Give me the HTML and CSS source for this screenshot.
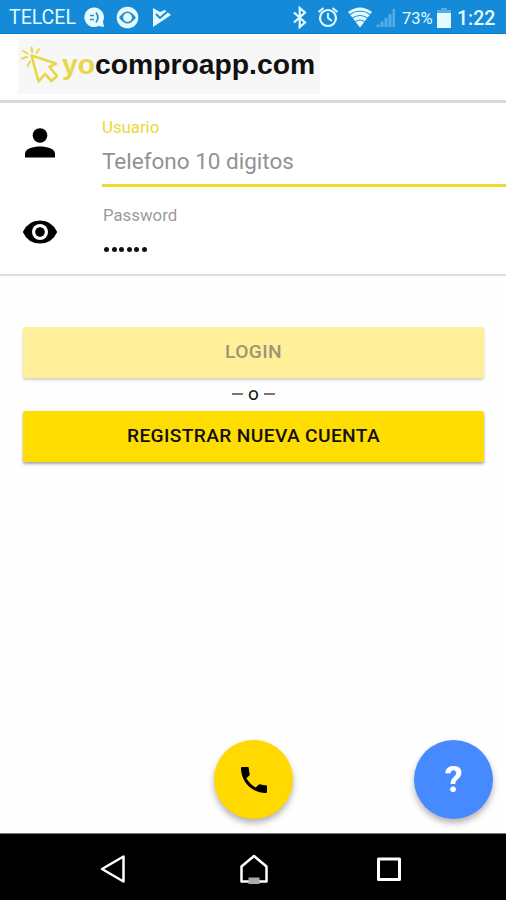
FILE: index.html
```html
<!DOCTYPE html>
<html lang="es">
<head>
<meta charset="utf-8">
<title>yocomproapp.com</title>
<link rel="stylesheet" href="styles.css">
</head>
<body>
<div class="status">
  <span class="carrier">TELCEL</span>
  <svg class="notifications" width="90" height="24" viewBox="84 6 90 24">
    <path fill="#e4fbff" d="M94 7.500a9.800 9.800 0 1 0 4.500 18.600l5.500 1-1-5.500A9.800 9.800 0 0 0 94 7.500z"/>
    <path d="M90 15.500h4M90 19.500h4M96 12.500q3.800 5 0 10" fill="none" stroke="#288fce" stroke-width="1.700"/>
    <circle cx="127.500" cy="17.500" r="10.800" fill="#e4fbff"/>
    <path d="M119 17.500q8.500-12 17 0q-8.500 12-17 0z" fill="#288fce"/>
    <circle cx="127.500" cy="17.500" r="4.400" fill="#e4fbff"/>
    <path d="M153 8l7 4 5-2 6 5-18 12z" fill="#e4fbff"/>
    <path d="M156 14l4 4 8-7" fill="none" stroke="#158ad8" stroke-width="2"/>
  </svg>
  <svg class="indicators" width="108" height="24" viewBox="290 6 108 24">
    <path d="M294 12.500l11 10-5.300 4.500V8l5.300 4.500-11 10" fill="none" stroke="#e4fbff" stroke-width="2.200"/>
    <circle cx="328" cy="18" r="8" fill="none" stroke="#e4fbff" stroke-width="2.200"/>
    <path d="M328 13v5l4 3M318.500 12l5-4M337.500 12l-5-4" fill="none" stroke="#e4fbff" stroke-width="1.800"/>
    <path d="M348 12q12-9 24 0l-12 15.500z" fill="#e4fbff"/>
    <path d="M349.500 14.500q10.500-7 21 0M352.500 18q7.500-5 15 0M355.500 21.500q4.500-3 9 0" fill="none" stroke="#158ad8" stroke-width="1.100"/>
    <path d="M376.500 27v-2.500h3v2.500zM380.500 27v-5.500h3v5.500zM384.500 27v-9h3v9zM388.500 27v-13h3v13zM392.500 27v-18h2.500v18z" fill="#55ade6"/>
  </svg>
  <span class="percent">73%</span>
  <svg class="battery" width="14" height="20" viewBox="0 0 14 20"><path d="M4 0h6v2h4v5H0V2h4z" fill="#55ade6"/><path d="M0 5h14v15H0z" fill="#e4fbff"/></svg>
  <span class="clock">1:22</span>
</div>
<header class="header">
  <div class="brand">
    <svg width="44" height="44" viewBox="18 42 44 44" fill="none" stroke="#e8d649" stroke-linejoin="round" stroke-linecap="round">
      <path stroke-width="2.600" d="M31.500 55.500L56 63.500l-6.500 3.500 7.500 9-5.500 5-6.500-7-6.500 7.500z"/>
      <path stroke-width="2" d="M22 58.500l5-1.500M23 51l4.500 2.500M27.500 66l2.500-4.500M31.500 47.500l.8 4.500M39 49l-2.500 4"/>
    </svg>
    <span class="wordmark"><span class="yo">yo</span>comproapp.com</span>
  </div>
</header>
<main class="content">
  <form class="fields">
    <div class="field user">
      <svg class="field-icon" width="36" height="36" viewBox="0 0 36 36"><circle cx="18" cy="10.500" r="7.300"/><path d="M3 32.500v-4C3 24 11 21.500 18 21.500S33 24 33 28.500v4z"/></svg>
      <div class="field-body focused">
        <span class="label">Usuario</span>
        <span class="placeholder">Telefono 10 digitos</span>
      </div>
    </div>
    <div class="field pass">
      <svg class="field-icon" width="36" height="36" viewBox="0 0 36 36"><path d="M.800 18Q6 6.500 18 6.500T35.200 18Q30 29.500 18 29.500T.800 18z"/><circle cx="18" cy="18" r="8" fill="#fff"/><circle cx="18" cy="18" r="4.800"/></svg>
      <div class="field-body">
        <span class="label">Password</span>
        <span class="dots"><i></i><i></i><i></i><i></i><i></i><i></i></span>
      </div>
    </div>
  </form>
  <div class="actions">
    <div class="button disabled"><span>LOGIN</span></div>
    <div class="or"><i></i><span>o</span><i></i></div>
    <div class="button"><span>REGISTRAR NUEVA CUENTA</span></div>
  </div>
  <div class="fabs">
    <div class="fab call"><svg width="26" height="26" viewBox="0 0 26 26"><path d="M0 1Q0 0 1 0H6.800Q7.800 0 7.800 1 7.800 4.500 8.700 7 8.900 7.800 8.300 8.400L5.400 11.300Q9 17.400 14.700 20.600L17.600 17.700Q18.300 17.100 19.100 17.300 21.500 18.200 25 18.200 26 18.200 26 19.200V25Q26 26 25 26C11 26 0 15 0 1z"/></svg></div>
    <div class="fab help"><span>?</span></div>
  </div>
</main>
<nav class="navbar">
  <svg width="26" height="30" viewBox="0 0 26 30" fill="none" stroke="#fff" stroke-width="2.500" stroke-linejoin="round"><path d="M2 15L23.500 2.500v25z"/></svg>
  <svg class="home" width="30" height="30" viewBox="0 0 30 30" fill="none" stroke="#fff" stroke-width="2.500" stroke-linejoin="round"><path d="M2.500 27.500V12.500L15 2l12.500 10.500v15z"/><path d="M9.500 23.500h11v6.500h-11z" fill="#aaa" stroke="none"/></svg>
  <svg width="26" height="26" viewBox="0 0 26 26" fill="none" stroke="#fff" stroke-width="3" stroke-linejoin="round"><path d="M2.500 3h21v20.500h-21z"/></svg>
</nav>
</body>
</html>
```
FILE: styles.css
```css
* { box-sizing: border-box; }
body {
  margin: 0;
  height: 900px;
  display: flex;
  flex-direction: column;
  overflow: hidden;
  background: #fefefe;
  font-family: Roboto, sans-serif;
  color: #111;
}
svg { display: block; flex: none; }
.status {
  height: 34px;
  flex: none;
  display: flex;
  align-items: center;
  padding: 2px 11px 0 9px;
  background: #158ad8;
  border-bottom: 1px solid #087bc7;
  color: #e4fbff;
  white-space: nowrap;
}
.carrier { width: 75px; font-size: 19.500px; line-height: 24px; padding-top: 1px; }
.indicators { margin-left: auto; }
.percent { width: 36px; padding: 1px 0 0 4px; font-size: 16.500px; }
.battery { margin-left: 3px; }
.clock { width: 38px; margin-left: 6px; padding-top: 1px; font-size: 19.500px; font-weight: 500; }
.header {
  height: 69px;
  flex: none;
  padding: 5px 18px;
  background: #fff;
  border-bottom: 3px solid #d8d8d8;
}
.brand {
  width: 302px;
  height: 55px;
  display: flex;
  padding-top: 3px;
  background: #f7f7f7;
}
.wordmark {
  font: bold 28.300px/44px "Liberation Sans", sans-serif;
  white-space: nowrap;
}
.yo { color: #e8d649; }
.content { flex: 1; display: flex; flex-direction: column; }
.fields {
  height: 173px;
  border-bottom: 2px solid #dedede;
  background: #fff;
}
.field { display: flex; padding-left: 22px; }
.user { height: 84px; }
.user .field-icon { margin-top: 22px; }
.pass .field-icon { margin-top: 27px; }
.field-body { flex: 1; margin-left: 44px; display: flex; flex-direction: column; }
.focused { border-bottom: 3px solid #eddb27; }
.label { font-size: 16.800px; line-height: 20px; margin-top: 14px; color: #e9d936; }
.pass .label { margin-top: 18px; padding-left: 1px; color: #9b9b9b; }
.placeholder { margin-top: 9px; font-size: 22.500px; line-height: 30px; color: #929292; }
.dots { display: flex; gap: 2.600px; margin-top: 22px; padding-left: 2px; }
.dots i { width: 5px; height: 5px; border-radius: 50%; background: #111; }
.actions { padding: 51px 22px 0 23px; }
.button {
  height: 51px;
  border-radius: 2px;
  background: #fd0;
  box-shadow: 0 2px 3px rgba(0,0,0,.35);
  text-align: center;
  font-size: 19.200px;
  letter-spacing: .35px;
  font-weight: 500;
  line-height: 49px;
}
.disabled { background: #ffef98; color: #9d9675; box-shadow: 0 2px 3px rgba(0,0,0,.18); }
.or {
  height: 33px;
  display: flex;
  align-items: center;
  justify-content: center;
  gap: 5px;
  padding-bottom: 2px;
  font-size: 19px;
}
.or i { width: 11px; height: 2px; background: #777; }
.fabs {
  margin-top: auto;
  display: grid;
  grid-template-columns: 1fr 80px 1fr;
  padding: 0 13px 14px;
}
.fab {
  width: 79px;
  height: 79px;
  border-radius: 50%;
  display: flex;
  align-items: center;
  justify-content: center;
  box-shadow: 0 4px 6px rgba(0,0,0,.3);
}
.call { grid-column: 2; justify-self: end; background: #ffd900; }
.help { justify-self: end; background: #478aff; color: #fff; font-size: 36px; font-weight: 700; }
.navbar {
  height: 67px;
  flex: none;
  display: flex;
  align-items: center;
  justify-content: space-between;
  padding: 4px 104px 0 100px;
  background: #000;
  border-top: 1px solid #777;
}
.home { margin-left: 5px; }
```
